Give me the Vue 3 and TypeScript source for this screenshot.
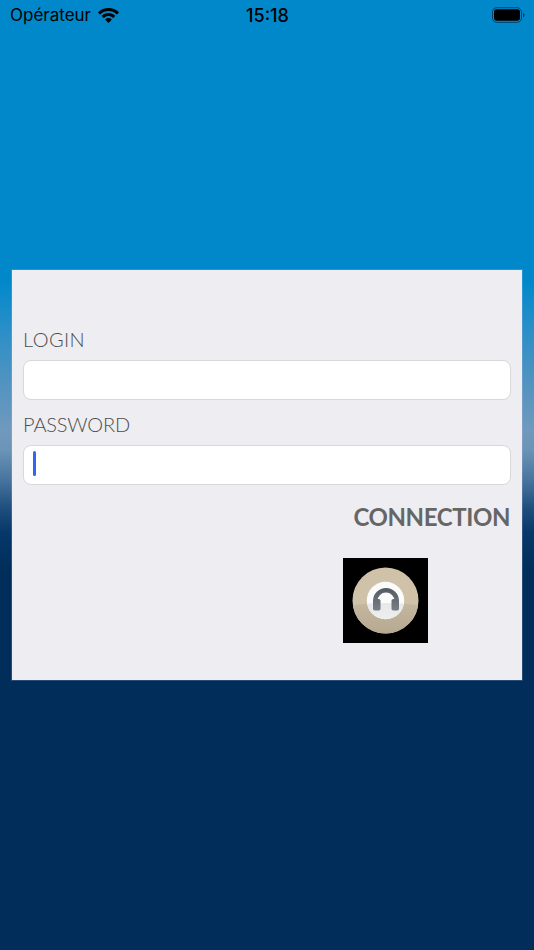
<script setup lang="ts">
import { ref } from 'vue';

const login = ref('');
const password = ref('');
</script>

<template>
  <div class="screen">
    <div class="status-bar">
      <div class="carrier">
        <span>Opérateur</span>
        <svg class="wifi" width="21" height="15" viewBox="0 0 21 15">
          <path d="M10.5 0C6.600 0 3 1.500.3 4.100a.5.5 0 0 0 0 .7l1.500 1.500a.5.5 0 0 0 .7 0C4.600 4.300 7.400 3.100 10.500 3.100s5.900 1.200 8 3.200a.5.5 0 0 0 .7 0l1.500-1.500a.5.5 0 0 0 0-.7C18 1.500 14.400 0 10.500 0z" fill="#000" />
          <path d="M10.500 5c-2.500 0-4.800 1-6.500 2.600a.5.5 0 0 0 0 .7l1.500 1.500a.5.5 0 0 0 .7 0c1.100-1.100 2.600-1.700 4.300-1.700s3.200.6 4.300 1.700a.5.5 0 0 0 .7 0L17 8.300a.5.5 0 0 0 0-.7C15.300 6 13 5 10.500 5z" fill="#000" />
          <path d="M10.500 10c-1.200 0-2.300.5-3.100 1.200a.4.4 0 0 0 0 .6l2.800 2.900a.4.4 0 0 0 .6 0l2.800-2.900a.4.4 0 0 0 0-.6c-.8-.7-1.900-1.200-3.100-1.200z" fill="#000" />
        </svg>
      </div>
      <span class="clock">15:18</span>
      <svg class="battery" width="33" height="16" viewBox="0 0 33 16">
        <rect x="0.500" y="0.700" width="29" height="14.600" rx="4.200" fill="none" stroke="#00406b" />
        <rect x="2" y="2.200" width="26" height="11.600" rx="2.800" fill="#000" />
        <path d="M31 5.500c.9.300 1.500 1.300 1.500 2.500s-.6 2.200-1.500 2.500z" fill="#00406b" />
      </svg>
    </div>

    <div class="card">
      <label class="field-label login-label" for="login">LOGIN</label>
      <input id="login" v-model="login" class="field" type="text" />
      <label class="field-label password-label" for="password">PASSWORD</label>
      <div class="field-wrap">
        <input id="password" v-model="password" class="field" type="password" />
        <span class="caret"></span>
      </div>
      <div class="actions">
        <span class="connect">CONNECTION</span>
      </div>
      <div class="logo-row">
        <svg class="logo" width="85" height="85" viewBox="0 0 85 85">
          <defs>
            <clipPath id="disc-clip"><circle cx="42.500" cy="42.500" r="33" /></clipPath>
            <clipPath id="core-clip"><circle cx="42.500" cy="42.500" r="18.700" /></clipPath>
            <linearGradient id="lower" x1="0" y1="0" x2="0" y2="1">
              <stop offset="0" stop-color="#c4b79f" />
              <stop offset="0.6" stop-color="#ab9d85" />
              <stop offset="1" stop-color="#ab9d85" />
            </linearGradient>
            <linearGradient id="lower-core" x1="0" y1="0" x2="0" y2="1">
              <stop offset="0" stop-color="#e6e8ea" />
              <stop offset="0.3" stop-color="#f3f3f4" />
              <stop offset="1" stop-color="#f3f3f4" />
            </linearGradient>
            <linearGradient id="band" gradientUnits="userSpaceOnUse" x1="0" y1="30" x2="0" y2="52">
              <stop offset="0" stop-color="#535b62" />
              <stop offset="1" stop-color="#777e85" />
            </linearGradient>
          </defs>
          <rect width="85" height="85" fill="#000" />
          <circle cx="42.500" cy="42.500" r="33" fill="#cfc2a9" />
          <ellipse cx="42.500" cy="92" rx="110" ry="47" fill="url(#lower)" clip-path="url(#disc-clip)" />
          <circle cx="42.500" cy="42.500" r="18.700" fill="#fbfbfb" />
          <ellipse cx="42.500" cy="92" rx="110" ry="47" fill="url(#lower-core)" clip-path="url(#core-clip)" />
          <path d="M32.250 46v-3a10.750 10.750 0 0 1 21.500 0v3" fill="none" stroke="url(#band)" stroke-width="4.500" />
          <rect x="30" y="41" width="7.500" height="11.500" rx="1.800" fill="url(#band)" />
          <rect x="48.500" y="41" width="7.500" height="11.500" rx="1.800" fill="url(#band)" />
        </svg>
      </div>
    </div>
  </div>
</template>

<style>
html,
body {
  margin: 0;
  padding: 0;
}
</style>

<style scoped>
.screen {
  width: 534px;
  height: 950px;
  overflow: hidden;
  display: flex;
  flex-direction: column;
  background: linear-gradient(to bottom, #0088cb 0, #0088cb 280px, #2b8fc8 330px, #4f93c0 380px, #7099bd 430px, #6b94b6 450px, #45729c 482px, #1f4f7e 508px, #06386a 532px, #002d5a 575px, #002d5a 950px);
  font-family: Lato, "Open Sans", sans-serif;
}

.status-bar {
  height: 30px;
  flex: none;
  display: grid;
  grid-template-columns: 1fr auto 1fr;
  align-items: center;
  padding: 0 9px 0 10px;
  color: #000;
  font-family: Inter, "Liberation Sans", sans-serif;
}

.carrier {
  display: flex;
  align-items: center;
  gap: 7px;
  font-size: 17px;
}

.clock {
  font-size: 18px;
  font-weight: 500;
}

.battery {
  justify-self: end;
}

.card {
  margin: 240px 12px 0;
  height: 410px;
  box-sizing: border-box;
  padding: 57px 11px 0;
  background: #eeedf2;
  box-shadow: 0 0 0 1px rgba(200, 200, 240, 0.2);
  display: flex;
  flex-direction: column;
}

.field-label {
  font-size: 20px;
  line-height: 24px;
  font-weight: 300;
  color: #4d4d4d;
  margin-bottom: 9px;
}

.login-label {
  letter-spacing: 0.4px;
}

.password-label {
  margin-top: 12px;
  letter-spacing: -0.2px;
}

.field-wrap {
  position: relative;
}

.field {
  display: block;
  width: 100%;
  height: 40px;
  box-sizing: border-box;
  background: #fff;
  border: 1px solid #d8d8d8;
  border-radius: 8px;
  outline: none;
}

.caret {
  position: absolute;
  left: 10px;
  top: 6px;
  width: 3px;
  height: 25px;
  border-radius: 2px;
  background: #3366f0;
}

.actions {
  display: flex;
  justify-content: flex-end;
  margin-top: 18px;
  padding-right: 1px;
}

.connect {
  font-size: 24px;
  line-height: 28px;
  font-weight: 700;
  letter-spacing: -0.4px;
  color: #666;
}

.logo-row {
  display: flex;
  justify-content: flex-end;
  margin-top: 27px;
  padding-right: 83px;
}

.logo {
  display: block;
}
</style>
